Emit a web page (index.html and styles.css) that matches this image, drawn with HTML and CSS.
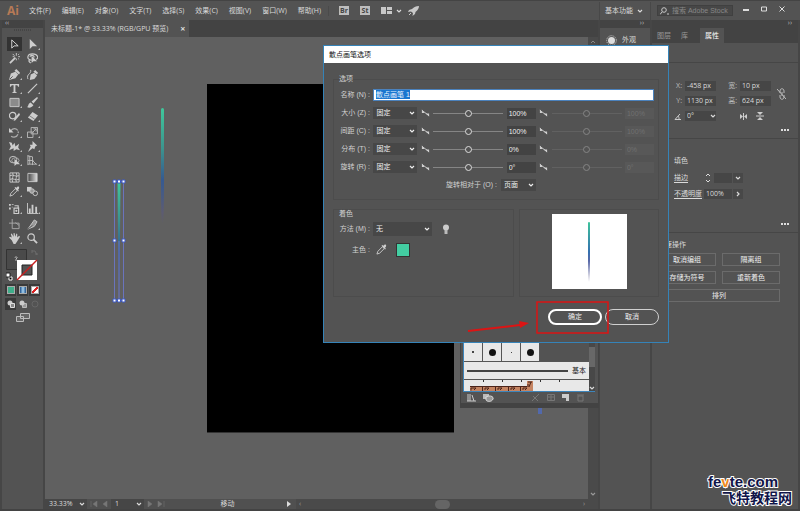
FILE: index.html
```html
<!DOCTYPE html>
<html lang="zh-CN">
<head>
<meta charset="utf-8">
<title>未标题-1</title>
<link rel="stylesheet" href="styles.css">
</head>
<body>
<svg class="defs" aria-hidden="true">
  <symbol id="down" viewBox="0 0 6 6"><path d="M1 2l2 2 2-2" fill="none" stroke="currentColor" stroke-width="1.2"/></symbol>
  <symbol id="right" viewBox="0 0 6 6"><path d="M2 1l2 2-2 2" fill="none" stroke="currentColor" stroke-width="1.2"/></symbol>
  <symbol id="press" viewBox="0 0 10 8"><path d="M1 0v4h3zM5 4.500h4V8z" fill="currentColor"/><path d="M1 1l8 6" stroke="currentColor"/></symbol>
  <symbol id="dots" viewBox="0 0 9 3"><path d="M0 0h2v2H0zM3 0h2v2H3zM6 0h2v2H6z" fill="currentColor"/></symbol>
  <symbol id="dropper" viewBox="0 0 12 12"><path d="M1 11l1-3 5-5 2 2-5 5z" fill="none" stroke="currentColor"/><path d="M6 2l4 4 .8-.8-1-1C12 2 11 0 9.500 .5L8 2l-1-1z" fill="currentColor"/></symbol>
</svg>

<header class="menubar">
  <span class="logo">Ai</span>
  <nav class="menus">
    <button>文件(F)</button><button>编辑(E)</button><button>对象(O)</button><button>文字(T)</button><button>选择(S)</button><button>效果(C)</button><button>视图(V)</button><button>窗口(W)</button><button>帮助(H)</button>
  </nav>
  <div class="apps">
    <button class="app">Br</button><button class="app">St</button>
    <button class="arrange" aria-label="排列文档"><svg width="11" height="7" viewBox="0 0 11 7"><path d="M0 0h5v7H0zM6 0h5v3H6zM6 4h5v3H6z" fill="#c8c8c8"/></svg><svg width="6" height="6"><use href="#down"/></svg></button>
    <button aria-label="GPU"><svg width="11" height="10" viewBox="0 0 11 10"><path d="M11 0C8 0 6 1 4 3L1 4 0 6l3-.5L5 7l-.5 3L7 8l.5-2C10 4 11 2 11 0z" fill="#c8c8c8"/><path d="M1 9l2-2" stroke="#c8c8c8"/></svg></button>
  </div>
  <button class="workspace-menu">基本功能<svg width="6" height="6"><use href="#down"/></svg></button>
  <label class="search"><svg width="9" height="8" viewBox="0 0 9 8"><circle cx="4" cy="3" r="2.300" fill="none" stroke="#c8c8c8"/><path d="M2 5L0 7.500M7 7h2" stroke="#c8c8c8"/></svg><input type="text" placeholder="搜索 Adobe Stock" aria-label="搜索"></label>
  <div class="window-buttons">
    <button aria-label="最小化"><svg width="6" height="6"><path d="M0 4h6" stroke="#ddd" stroke-width="2"/></svg></button>
    <button aria-label="最大化"><svg width="6" height="6"><path d="M.5 1h5v4h-5z" fill="none" stroke="#ddd"/></svg></button>
    <button aria-label="关闭"><svg width="6" height="6"><path d="M.5 .5l5 5M5.500 .5l-5 5" stroke="#ddd"/></svg></button>
  </div>
</header>

<div class="workspace">
  <aside class="toolbar">
    <div class="dock-strip left">‹‹</div>
    <div class="grip"></div>
    <div class="tools">
      <button class="tool active" aria-label="选择"><svg viewBox="0 0 12 12"><path d="M3 1v9l2.500-2.500H10z" fill="none" stroke="#ddd"/></svg></button>
      <button class="tool more" aria-label="直接选择"><svg viewBox="0 0 12 12"><path d="M3 0v11l3-3h5z" fill="#ccc"/></svg></button>
      <button class="tool" aria-label="魔棒"><svg viewBox="0 0 12 12"><path d="M1 11l6-6" stroke="#ccc" stroke-width="2"/><path d="M8 0v3M8 6v2M4 4h2M10 4h2M4 1l2 2M11 1L10 2M11 7l-1-1" stroke="#ccc"/></svg></button>
      <button class="tool" aria-label="套索"><svg viewBox="0 0 12 12"><path d="M5 8C-1 7 0 1 6 1s7 5 4 6M3 7c-2 2 0 3 1 4M3 4c3-3 6 0 4 1" fill="none" stroke="#ccc" stroke-width="1.300"/><path d="M5 3v8l2-2h4z" fill="#ccc"/></svg></button>
    </div>
    <div class="tools">
      <button class="tool more" aria-label="钢笔"><svg viewBox="0 0 12 12"><path d="M0 12l2-7 5-2 3 3-3 4z" fill="#ccc"/><path d="M8 0l4 4-1 2-5-4z" fill="#ccc"/><path d="M1 11l3-3" stroke="#535353"/></svg></button>
      <button class="tool" aria-label="曲率"><svg viewBox="0 0 12 12"><path d="M3 12l1-6 4-2 3 3-3 4z" fill="#ccc"/><path d="M9 1l3 3-1 2-4-3z" fill="#ccc"/><path d="M1 11C-1 5 5 6 4 1" fill="none" stroke="#ccc"/></svg></button>
      <button class="tool more" aria-label="文字"><svg viewBox="0 0 12 12"><path d="M1 1h10v3h-1L9 2.500H7v7l2 1.500H3l2-1.500v-7H3L2 4H1z" fill="#ccc"/></svg></button>
      <button class="tool more" aria-label="直线"><svg viewBox="0 0 12 12"><path d="M1 11L11 1" stroke="#ccc" stroke-width="1.300"/></svg></button>
      <button class="tool more" aria-label="矩形"><svg viewBox="0 0 12 12"><path d="M1 1.500h10v9H1z" fill="#8b8b8b" stroke="#ccc"/></svg></button>
      <button class="tool more" aria-label="画笔"><svg viewBox="0 0 12 12"><path d="M5 5l6-5 1 1-5 6zM4 6l3 3c-2 3-5 3-7 2 2-1 1-4 4-5z" fill="#ccc"/></svg></button>
      <button class="tool more" aria-label="Shaper"><svg viewBox="0 0 12 12"><circle cx="4" cy="5" r="3.500" fill="none" stroke="#ccc" stroke-width="1.300"/><path d="M5 11l1-3 5-6 1 2-5 6z" fill="#ccc"/></svg></button>
      <button class="tool more" aria-label="橡皮擦"><svg viewBox="0 0 12 12"><path d="M6 1l6 4-5 6-6-4z" fill="#ccc"/><path d="M2.500 5l6 4" stroke="#535353" stroke-width=".7"/></svg></button>
    </div>
    <div class="tools">
      <button class="tool more" aria-label="旋转"><svg viewBox="0 0 12 12"><path d="M2 4c4-5 9-1 8 3s-5 5-8 3" fill="none" stroke="#aaa" stroke-width="1.400" stroke-dasharray="9 1 2 1"/><path d="M0 1v5h5z" fill="#ccc"/></svg></button>
      <button class="tool more" aria-label="缩放"><svg viewBox="0 0 12 12"><path d="M4.500 .5h7v7h-7zM.5 5.500h6v6h-6zM6 6l4-4M7 2h3v3" fill="none" stroke="#bbb"/></svg></button>
      <button class="tool more" aria-label="宽度"><svg viewBox="0 0 12 12"><path d="M0 1l3 1 1 3 2-3 1 4 4-3-1 4 2 3-4-1-3 2V8L0 10l2-4z" fill="#ccc"/></svg></button>
      <button class="tool more" aria-label="操控变形"><svg viewBox="0 0 12 12"><path d="M6 0l5 5-2 1-1 3-2-1-5 4 3-6-1-2h3z" fill="#ccc"/></svg></button>
      <button class="tool more" aria-label="形状生成器"><svg viewBox="0 0 12 12"><ellipse cx="4.500" cy="5" rx="4" ry="3.500" fill="none" stroke="#ccc"/><ellipse cx="7" cy="6" rx="4" ry="3" fill="none" stroke="#aaa"/><path d="M6 4v8l2-2h4z" fill="#ccc"/></svg></button>
      <button class="tool more" aria-label="透视网格"><svg viewBox="0 0 12 12"><path d="M1 0v11M1 1l5 1v9M1 6h6M1 10h10M3 1v9M6 6l4 4" fill="none" stroke="#bbb"/></svg></button>
    </div>
    <div class="tools wide">
      <button class="tool" aria-label="网格"><svg viewBox="0 0 12 12"><path d="M1 1h10v10H1zM4 1c2 4-2 6 0 10M8 1c2 4-2 6 0 10M1 4c4-2 6 2 10 0M1 8c4-2 6 2 10 0" fill="none" stroke="#ccc"/></svg></button>
      <button class="tool" aria-label="渐变"><svg viewBox="0 0 12 12"><linearGradient id="gg"><stop stop-color="#444"/><stop offset="1" stop-color="#ddd"/></linearGradient><path d="M1 1.500h10v9H1z" fill="url(#gg)" stroke="#ccc"/></svg></button>
      <button class="tool more" aria-label="吸管"><svg viewBox="0 0 12 12" color="#ccc"><use href="#dropper"/></svg></button>
      <button class="tool" aria-label="混合"><svg viewBox="0 0 12 12"><path d="M0 1h5v5H0z" fill="#ccc"/><circle cx="5.500" cy="5.500" r="2.500" fill="#999" stroke="#ccc"/><circle cx="9" cy="8" r="2.500" fill="#535353" stroke="#ccc"/></svg></button>
    </div>
    <div class="tools wide">
      <button class="tool more" aria-label="符号喷枪"><svg viewBox="0 0 12 12"><path d="M5.500 5.500h5v6h-5zM6 3h4v2" fill="none" stroke="#ccc" stroke-width="1.300"/><path d="M0 1h2v2H0zM3 1h2v1H3zM0 5h2v2H0zM3 4h1v1H3z" fill="#ccc"/><circle cx="8" cy="8.500" r="1.200" fill="#ccc"/></svg></button>
      <button class="tool more" aria-label="柱形图"><svg viewBox="0 0 12 12"><path d="M.5 0v11.500H12" fill="none" stroke="#ccc"/><path d="M2 6h2v5H2zM5 2h2v9H5zM9 4h2v7H9z" fill="#ccc"/></svg></button>
    </div>
    <div class="tools">
      <button class="tool" aria-label="画板"><svg viewBox="0 0 12 12"><path d="M3.500 0v10.500H11v-6H0M7 4l4 3" fill="none" stroke="#aaa"/></svg></button>
      <button class="tool more" aria-label="切片"><svg viewBox="0 0 12 12"><path d="M1 11L8 1l3 2-3 5z" fill="#999" stroke="#ccc"/><path d="M1 11l5-4" stroke="#555"/></svg></button>
      <button class="tool more" aria-label="抓手"><svg viewBox="0 0 12 12"><path d="M3 8L0 5l1-1 2 1-1-4 1-.5L5 4V0h1l1 4 1-3.500 1 .5v4l2-2 1 1-3 5-2 3H5z" fill="#ccc"/></svg></button>
      <button class="tool" aria-label="缩放镜"><svg viewBox="0 0 12 12"><circle cx="4.500" cy="4.500" r="3.500" fill="none" stroke="#ccc" stroke-width="1.300"/><path d="M7 7l4 4" stroke="#ccc" stroke-width="2"/></svg></button>
    </div>
    <svg class="paint" width="34" height="32" viewBox="0 0 34 32">
      <path d="M.5 .5h20v20H.5z" fill="#4a4a4a" stroke="#333"/><path d="M9 9c0-2 3-1 2 0l-1 1v2" fill="none" stroke="#bbb"/>
      <path d="M26 2h3l2 4M26 1v3M29 5h3" fill="none" stroke="#6d6d6d"/>
      <path d="M11 11h20v20H11z" fill="#fff"/><path d="M16 16h10v10H16z" fill="#535353" stroke="#222"/><path d="M11 31L31 11" stroke="#c81e1e" stroke-width="1.500"/>
      <path d="M3 28h3v3H3z" fill="#000" stroke="#fff"/><path d="M0 24h4v4H0z" fill="#fff" stroke="#222"/>
    </svg>
    <div class="modes">
      <button class="mode" aria-label="颜色"><i class="solid"></i></button><button class="mode" aria-label="渐变填色"><i class="ramp"></i></button><button class="mode" aria-label="无"><i class="none"></i></button>
    </div>
    <div class="modes">
      <button class="mode" aria-label="正常绘图"><svg width="8" height="8"><circle cx="3" cy="3" r="2.500" fill="#ccc"/><path d="M3.500 3.500h4v4h-4z" fill="#888" stroke="#ddd"/></svg></button><button class="mode plain" aria-label="背面绘图"><svg width="8" height="8"><path d="M3.500 3.500h4v4h-4z" fill="#999" stroke="#bbb"/><circle cx="3" cy="3" r="2.500" fill="#ccc"/></svg></button><button class="mode plain" aria-label="内部绘图"><svg width="8" height="8"><circle cx="4" cy="4" r="3" fill="none" stroke="#666"/></svg></button>
    </div>
    <button class="screen" aria-label="屏幕模式"><svg width="14" height="10"><path d="M4.500 .5h9v5h-9zM.5 3.500h7v5h-7z" fill="#666" stroke="#bbb"/></svg></button>
  </aside>

  <main class="document">
    <div class="tabs"><div class="tab">未标题-1* @ 33.33% (RGB/GPU 预览)<button aria-label="关闭文档">×</button></div></div>
    <div class="view">
      <div class="canvas">
        <div class="artboard"></div>
        <div class="stroke"></div>
        <svg class="selection" width="14" height="124" viewBox="0 0 14 124">
          <defs><linearGradient id="ink" x2="0" y2="1"><stop stop-color="#3fc89c"/><stop offset=".35" stop-color="#3b8f90"/><stop offset=".6" stop-color="#365b92"/><stop offset="1" stop-color="#666476"/></linearGradient></defs>
          <path d="M5.500 2h3l-1 119h-1z" fill="url(#ink)"/>
          <path d="M2.500 2.500h9v119h-9zM7 62v59" fill="none" stroke="#6a74bd"/>
          <g fill="#fff" stroke="#3c5bc8"><path d="M1 1h3v3H1zM5.500 1h3v3h-3zM10 1h3v3h-3zM1 60h3v3H1zM10 60h3v3h-3zM1 120h3v3H1zM5.500 120h3v3h-3zM10 120h3v3h-3z"/></g>
        </svg>
        <span class="marker"></span>
      </div>
      <div class="vscroll"><svg width="6" height="6"><path d="M1 4l2-2 2 2" fill="none" stroke="#888"/></svg><svg width="6" height="6"><use href="#down"/></svg></div>
    </div>
    <footer class="status">
      <div class="field zoom"><input value="33.33%" aria-label="缩放比例"><svg width="6" height="6"><use href="#down"/></svg></div>
      <svg class="dim" width="18" height="6"><path d="M1 0v6M7 0v6L3 3zM17 0v6l-4-3z" fill="#777" stroke="#777" stroke-width=".5"/></svg>
      <div class="field page"><input value="1" aria-label="画板"><svg width="6" height="6"><use href="#down"/></svg></div>
      <svg class="dim" width="18" height="6"><path d="M1 0v6l4-3zM11 0v6l4-3zM17 0v6" fill="#777" stroke="#777" stroke-width=".5"/></svg>
      <span class="tool-name">移动</span>
      <svg width="4" height="6"><path d="M0 0v6l4-3z" fill="#ddd"/></svg>
      <div class="hscroll"><span>‹</span><i></i><span>›</span></div>
    </footer>
  </main>

  <aside class="dock narrow">
    <div class="dock-strip">››</div>
    <div class="dock-item"><svg width="11" height="11" viewBox="0 0 11 11"><circle cx="5.500" cy="5.500" r="3.500" fill="#ddd"/><circle cx="5.500" cy="5.500" r="4.800" fill="none" stroke="#ccc" stroke-dasharray="1 1"/></svg>外观</div>
  </aside>

  <aside class="dock props">
    <div class="dock-strip">››</div>
    <div class="dock-tabs"><button>图层</button><button>库</button><button class="on">属性</button></div>
    <section class="kind"></section>
    <section class="transform">
      <label for="px">X:</label><input id="px" value="-458 px"><label for="pw">宽:</label><input id="pw" value="10 px">
      <label for="py">Y:</label><input id="py" value="1130 px"><label for="ph">高:</label><input id="ph" value="624 px">
      <button class="link" aria-label="约束比例"><svg width="9" height="12" viewBox="0 0 9 12"><path d="M3 5V3c0-3 4-3 4 0v2M3 7v2c0 3 4 3 4 0V7M5 4v4M0 1l9 10" fill="none" stroke="#bbb"/></svg></button>
      <label for="pa"><svg width="8" height="7"><path d="M7 6.500H1L6 1M4 3c1 1 1 2 1 3" fill="none" stroke="#ccc"/></svg></label>
      <div class="field"><input id="pa" value="0°"><svg width="6" height="6"><use href="#down"/></svg></div>
      <div class="flips"><svg width="9" height="7"><path d="M1 1v5l3-2.500zM8 1v5L5 3.500z" fill="#ccc"/><path d="M4.500 0v7" stroke="#ccc"/></svg><svg width="8" height="8"><path d="M1 0h6L4 3zM1 8h6L4 5z" fill="#ccc"/><path d="M0 4h8" stroke="#ccc"/></svg></div>
      <svg class="dots" width="9" height="3"><use href="#dots"/></svg>
    </section>
    <section class="appearance">
      <h2>填色</h2>
      <div class="line"><label for="sw">描边</label><svg width="6" height="10"><path d="M1 3l2-2 2 2M1 7l2 2 2-2" fill="none" stroke="#ddd"/></svg><input id="sw" class="short"><button aria-label="描边粗细"><svg width="6" height="6"><use href="#down"/></svg></button></div>
      <div class="line"><label for="op">不透明度</label><input id="op" value="100%"><button aria-label="更多不透明度"><svg width="6" height="6"><use href="#right"/></svg></button></div>
      <svg class="dots" width="9" height="3"><use href="#dots"/></svg>
    </section>
    <section class="actions">
      <h2>快速操作</h2>
      <div class="action-grid"><button>取消编组</button><button>隔离组</button><button>存储为符号</button><button>重新着色</button><button class="full">排列</button></div>
    </section>
  </aside>
</div>

<section class="brushes" aria-label="画笔">
  <div class="brush-body">
    <div class="brush-list">
      <div class="cells"><span><i class="s1"></i></span><span><i class="s2"></i></span><span><i class="s3"></i></span><span><i class="s2"></i></span></div>
      <div class="basic"><i></i>基本</div>
      <svg class="pattern" width="125" height="11" viewBox="0 0 125 11"><path d="M0 0h125v11H0z" fill="#e8e8e8"/><path d="M19.500 0v2M38.500 0v2M57.500 0v2M76.500 0v2M95.500 0v2" stroke="#333"/><path d="M6 6h57V1h6v10H6z" fill="#c58462"/><path d="M6 6.500h57M7 10.500V8h5l-2 2M18.500 11V6M21 10V8h4l-2 2M31.500 11V6M34 10V8h4l-2 2M44.500 11V6M47 10V8h4l-2 2M56.500 11V6M59 10V8h4l-2 2M64 2h4M67 2l-2 5M64 7V4" fill="none" stroke="#4b241a"/></svg>
    </div>
    <div class="brush-scroll"><i></i><svg width="6" height="6"><use href="#down"/></svg></div>
  </div>
  <div class="brush-tools">
    <svg width="9" height="8"><path d="M1 0v7M3 0v7M5 1l2 6M0 7h9" stroke="#ccc" fill="none"/></svg>
    <svg width="11" height="8"><path d="M0 0h6v5H0z" fill="#bbb"/><path d="M3 3c3-2 8-1 7 2s-6 3-7 1z" fill="#999" stroke="#ddd"/></svg>
    <svg class="push" width="8" height="8"><path d="M0 7l7-7M1 2l5 5" stroke="#777"/></svg>
    <svg width="8" height="8"><path d="M.5 .5h7v6h-7zM0 3h8M4 0v7" stroke="#777" fill="none"/></svg>
    <svg width="8" height="8"><path d="M0 0h7v7H4V4H0z" fill="#ccc"/></svg>
    <svg width="7" height="8"><path d="M1 2h5v5H1zM0 1h7" stroke="#777" fill="none"/></svg>
  </div>
</section>

<div class="dialog" role="dialog" aria-label="散点画笔选项">
  <div class="title">散点画笔选项</div>
  <div class="content">
    <div class="group options">
      <h2>选项</h2>
      <div class="row"><label for="nm">名称 (N) :</label><div class="name"><input id="nm" aria-label="名称"><mark>散点画笔 1</mark></div></div>
      <div class="row"><label for="r1">大小 (Z) :</label><select id="r1"><option>固定</option></select><svg width="9" height="8"><use href="#press"/></svg><input type="range" aria-label="大小"><input value="100%" aria-label="大小值"><svg width="9" height="8"><use href="#press"/></svg><input type="range" disabled aria-label="大小上限"><input value="100%" disabled aria-label="大小上限值"></div>
      <div class="row"><label for="r2">间距 (C) :</label><select id="r2"><option>固定</option></select><svg width="9" height="8"><use href="#press"/></svg><input type="range" aria-label="间距"><input value="100%" aria-label="间距值"><svg width="9" height="8"><use href="#press"/></svg><input type="range" disabled aria-label="间距上限"><input value="100%" disabled aria-label="间距上限值"></div>
      <div class="row"><label for="r3">分布 (T) :</label><select id="r3"><option>固定</option></select><svg width="9" height="8"><use href="#press"/></svg><input type="range" aria-label="分布"><input value="0%" aria-label="分布值"><svg width="9" height="8"><use href="#press"/></svg><input type="range" disabled aria-label="分布上限"><input value="0%" disabled aria-label="分布上限值"></div>
      <div class="row"><label for="r4">旋转 (R) :</label><select id="r4"><option>固定</option></select><svg width="9" height="8"><use href="#press"/></svg><input type="range" aria-label="旋转"><input value="0°" aria-label="旋转值"><svg width="9" height="8"><use href="#press"/></svg><input type="range" disabled aria-label="旋转上限"><input value="0°" disabled aria-label="旋转上限值"></div>
      <div class="relative"><label for="rel">旋转相对于 (O) :</label><select id="rel"><option>页面</option></select></div>
    </div>
    <div class="lower">
      <div class="group tint">
        <h2>着色</h2>
        <div class="method"><label for="mt">方法 (M) :</label><select id="mt"><option>无</option></select><svg width="8" height="11" viewBox="0 0 8 11"><circle cx="4" cy="3.500" r="3" fill="#ccc"/><path d="M2.500 6h3v4h-3z" fill="#bbb"/></svg></div>
        <div class="key"><span>主色 :</span><svg width="11" height="11" color="#ccc"><use href="#dropper"/></svg><button class="swatch" aria-label="主色"></button></div>
      </div>
      <div class="group preview"><div class="paper"><i></i></div></div>
    </div>
    <div class="buttons"><button class="ok">确定</button><button>取消</button></div>
  </div>
  <svg class="callout" width="144" height="36" viewBox="0 0 144 36"><path d="M70 3h71v31H70z" fill="none" stroke="#dc1414" stroke-width="1.500"/><path d="M1 32l52-6" stroke="#dc1414" stroke-width="2"/><path d="M52 22l10 2-9 5z" fill="#dc1414"/></svg>
</div>

<div class="watermark"><b>fe<em>v</em>te.com</b><span>飞特教程网</span></div>
</body>
</html>
```
FILE: styles.css
```css
* { box-sizing: border-box; margin: 0; padding: 0; }
html, body { height: 100%; }
body {
  display: flex; flex-direction: column; overflow: hidden; position: relative;
  background: #535353; color: #dadada; border-bottom: 2px solid #434343;
  font: 7px/10px "Open Sans", "Noto Sans CJK SC", sans-serif;
}
.defs { position: absolute; width: 0; height: 0; }
svg { display: block; flex: none; }
button, input, select { font: inherit; color: inherit; background: none; border: 0; border-radius: 0; outline: 0; min-width: 0; }
h2 { font: inherit; }
i { display: block; }

.menubar { display: flex; align-items: center; height: 20px; flex: none; border-top: 1px solid #444; }
.logo { width: 29px; padding-left: 7px; color: #b77a56; font: bold 12px/18px "Open Sans", sans-serif; }
.menus { display: flex; gap: 11px; padding-right: 7px; border-right: 1px solid #4a4a4a; white-space: nowrap; }
.apps { display: flex; align-items: center; gap: 11px; padding-left: 10px; flex: 1; }
.apps .app { width: 10px; height: 9px; background: #bdbdbd; color: #444; font-weight: bold; line-height: 9px; }
.arrange { display: flex; align-items: center; gap: 4px; margin-right: -5px; }
.workspace-menu { display: flex; align-items: center; justify-content: space-between; width: 52px; height: 18px; padding: 0 7px 0 5px; border: solid #484848; border-width: 0 1px; }
.search { display: flex; align-items: center; gap: 3px; width: 76px; height: 11px; margin-left: 6px; padding: 0 1px 0 2px; background: #474747; border: 1px solid #404040; }
.search input { flex: 1; width: 0; font-family: "Liberation Sans", "Noto Sans CJK SC", sans-serif; }
.search input::placeholder { color: #888; }
.window-buttons { display: flex; align-items: center; gap: 12px; padding: 0 15px 4px 10px; }

.workspace { display: flex; flex: 1; min-height: 0; }
.dock-strip { height: 8px; padding-right: 6px; background: #434343; color: #bbb; text-align: right; line-height: 6px; }
.dock-strip.left { padding-left: 3px; text-align: left; }
.toolbar { width: 45px; flex: none; border: solid #464646; border-width: 0 2px; }
.grip { height: 2px; margin: 1px 12px 6px; border: dotted #454545; border-width: 1px 0; }
.tools { display: grid; grid-template-columns: 15px 15px; gap: 0 3px; margin: 0 0 2px 5px; }
.tools.wide { margin-top: 3px; }
.tool { position: relative; height: 14px; padding: 2px; display: grid; place-items: center; }
.tool svg { width: 11px; height: 11px; }
.tool.active { background: #333; }
.tool.more::after { content: ""; position: absolute; right: 0; bottom: 1px; border: 1px solid #bbb; border-top-color: transparent; border-left-color: transparent; }
.paint { margin: 4px 0 3px 4px; }
.modes { display: flex; gap: 1px; margin: 0 0 2px 3px; }
.mode { width: 11px; height: 12px; display: grid; place-items: center; background: #3a3a3a; }
.mode.plain { background: none; }
.mode i { width: 8px; height: 8px; border: 1px solid #aaa; }
.mode .solid { background: #3fae8a; }
.mode .ramp { background: linear-gradient(90deg, #1c4f8c, #a8d4f0, #1c4f8c); }
.mode .none { background: linear-gradient(135deg, #fff 38%, #d22 40%, #d22 60%, #fff 62%); }
.screen { display: block; margin: 3px 0 0 14px; }

.document { flex: 1; min-width: 0; display: flex; flex-direction: column; }
.tabs { height: 17px; background: #434343; display: flex; flex: none; }
.tab { display: flex; align-items: center; gap: 12px; padding: 0 4px 0 6px; background: #535353; white-space: nowrap; }
.tab button { font: bold 9px/10px "Open Sans", sans-serif; }
.view { display: flex; flex: 1; min-height: 0; }
.canvas { position: relative; flex: 1; background: #606060; overflow: hidden; }
.artboard { position: absolute; left: 162px; top: 47px; width: 247px; height: 349px; background: #000; border-bottom: 1px solid #333; }
.stroke { position: absolute; left: 116px; top: 71px; width: 3px; height: 116px; border-radius: 2px 2px 50% 50%; background: linear-gradient(#3fc89c, #3c948e 35%, #355a92 62%, #5c5b73 90%, #606060); }
.selection { position: absolute; left: 67px; top: 142px; }
.marker { position: absolute; left: 493px; top: 371px; width: 4px; height: 6px; background: #5269ac; }
.vscroll { width: 10px; padding: 2px; background: #4a4a4a; color: #999; display: flex; flex-direction: column; justify-content: space-between; }
.status { display: flex; align-items: center; height: 10px; flex: none; background: #505050; }
.field { display: flex; align-items: center; }
.field input { flex: 1; width: 0; }
.status .field { height: 10px; background: #464646; padding: 0 2px 0 4px; }
.zoom { width: 42px; }
.page { width: 33px; }
.dim { margin: 0 3px; }
.tool-name { width: 119px; text-align: center; }
.hscroll { display: flex; flex: 1; justify-content: space-between; align-items: center; height: 10px; margin-left: 5px; padding: 0 13px 0 3px; background: #4a4a4a; color: #999; }
.hscroll i { width: 15px; height: 9px; border-radius: 5px; background: #656565; }

.dock { flex: none; border-left: 2px solid #464646; }
.narrow { width: 52px; }
.dock-item { display: flex; align-items: center; gap: 5px; height: 24px; padding: 0 6px; }
.props { width: 150px; border-right: 2px solid #464646; }
.dock-tabs { display: flex; height: 15px; background: #434343; }
.dock-tabs button { padding: 0 5px; color: #999; }
.dock-tabs .on { margin-left: 7px; background: #535353; color: #fff; }
.props section { border-bottom: 1px solid #464646; }
.kind { height: 20px; }
.props input { background: #464646; height: 10px; padding: 0 2px; }
.transform { position: relative; height: 76px; padding: 18px 26px 0 20px; display: grid; grid-template-columns: 10px 31px 18px 31px; grid-auto-rows: 10px; gap: 5px 3px; align-items: center; }
.transform label { justify-self: end; color: #bbb; }
.transform .field { background: #464646; }
.flips { grid-column: 3 / 5; display: flex; align-items: center; gap: 8px; padding-left: 20px; }
.link { position: absolute; right: 12px; top: 25px; }
.dots { position: absolute; right: 8px; bottom: 6px; color: #ddd; }
.appearance { position: relative; height: 94px; padding: 17px 24px 0 22px; }
.appearance h2 { margin-bottom: 6px; }
.line { display: flex; align-items: center; height: 11px; margin-bottom: 5px; }
.line label { flex: none; width: 30px; text-decoration: underline; text-underline-offset: 2px; white-space: nowrap; }
.line svg + .short { width: 18px; margin-left: 4px; }
.line input { width: 28px; }
.line > svg { margin-left: 1px; margin-right: -1px; }
.line button { height: 10px; width: 10px; padding: 2px; margin-left: 1px; background: #484848; }
.props .actions { padding: 7px 18px 0 6px; border: 0; }
.action-grid { display: grid; grid-template-columns: 1fr 1fr; gap: 5px 6px; margin-top: 3px; }
.action-grid button { height: 13px; border: 1px solid #6b6b6b; color: #eee; line-height: 11px; }
.action-grid .full { grid-column: 1 / 3; }

.brushes { position: absolute; left: 460px; top: 338px; width: 139px; background: #535353; border: solid #434343; border-width: 0 1px 5px; }
.brush-body { display: flex; margin: 0 3px 0 2px; border: 1px solid #3d85bb; }
.brush-list { flex: 1; }
.cells { display: flex; height: 22px; padding-top: 4px; }
.cells span { width: 19px; display: grid; place-items: center; background: #e8e8e8; border-right: 1px solid #555; }
.cells i { border-radius: 50%; background: #111; }
.s1 { width: 2px; height: 2px; }
.s2 { width: 7px; height: 7px; }
.s3 { width: 1px; height: 1px; }
.basic { display: flex; align-items: center; gap: 4px; height: 19px; padding: 0 3px; background: #e8e8e8; color: #222; border: solid #555; border-width: 1px 0; }
.basic i { flex: 1; height: 2px; background: #444; }
.brush-scroll { width: 6px; display: flex; flex-direction: column; justify-content: space-between; background: #484848; }
.brush-scroll i { height: 20px; margin-top: 8px; background: #686868; }
.brush-tools { display: flex; align-items: center; gap: 7px; height: 11px; padding: 0 14px 0 6px; }
.brush-tools .push { margin-left: auto; }

.dialog { position: absolute; left: 323px; top: 45px; width: 346px; background: #535353; border: 1px solid #3583b8; color: #d0d0d0; font-family: "Liberation Sans", "Noto Sans CJK SC", sans-serif; }
.title { height: 17px; padding: 0 5px; background: #fff; color: #111; line-height: 17px; }
.content { padding: 16px 9px 17px; }
.group { border: 1px solid #4c4c4c; }
.group h2 { line-height: 8px; margin-top: -5px; }
.group label { white-space: nowrap; }
.options { height: 121px; padding: 0 4px 0 5px; }
.options h2 { margin-bottom: 3px; }
.row { display: grid; grid-template-columns: 31px 44px 9px 70px 29px 9px 70px 29px; justify-content: space-between; align-items: center; height: 18px; }
.row label { justify-self: end; }
.row:nth-child(2) { grid-template-columns: 31px 1fr; column-gap: 3px; }
.name { position: relative; height: 12px; background: #fff; border: 1px solid #4b82bd; }
.name input { position: absolute; inset: 0; width: 100%; height: 100%; }
.name mark { position: absolute; left: 2px; top: 0; height: 9px; line-height: 9px; background: #1976cf; color: #e8f4ff; }
select { appearance: none; height: 12px; padding: 0 3px; color: #eee; background: #474747 url("data:image/svg+xml,%3Csvg xmlns='http://www.w3.org/2000/svg' width='6' height='6'%3E%3Cpath d='M1 2l2 2 2-2' fill='none' stroke='%23eee' stroke-width='1.200'/%3E%3C/svg%3E") no-repeat right 2px center; }
.row input:not([type]) { height: 11px; color: #eee; }
.row > input:not([type]) { background: #434343; padding: 0 2px; }
.row > input:not([type]):disabled { background: #585858; color: #707070; }
input[type=range] { appearance: none; width: 100%; height: 9px; background: linear-gradient(#858585, #858585) center / 100% 1px no-repeat; }
input[type=range]::-webkit-slider-thumb { appearance: none; width: 7px; height: 7px; border: 1px solid #ddd; border-radius: 50%; background: #535353; }
input[type=range]:disabled { background-image: linear-gradient(#616161, #616161); }
input[type=range]:disabled::-webkit-slider-thumb { border-color: #858585; }
.relative { display: flex; justify-content: flex-end; align-items: center; gap: 4px; height: 18px; padding-right: 118px; }
.relative select { width: 35px; }
.lower { display: grid; grid-template-columns: 181px 1fr; gap: 5px; margin-top: 9px; }
.lower .group { height: 88px; }
.tint { padding: 0 5px; }
.tint h2 { margin: 0 0 4px; }
.method, .key { display: flex; align-items: center; }
.method label { width: 31px; text-align: right; }
.method select { width: 59px; height: 14px; margin: 0 10px 0 3px; }
.key { height: 15px; margin-top: 6px; }
.key span { width: 31px; text-align: right; }
.key svg { margin: 0 9px 0 6px; }
.swatch { width: 14px; height: 14px; background: #43cda2; border: 1px solid #333; }
.preview { display: grid; place-items: start center; padding-top: 4px; }
.paper { width: 75px; height: 75px; background: #fff; display: grid; place-items: center; }
.paper i { width: 2px; height: 60px; border-radius: 1px; background: linear-gradient(#3fc49c, #3470b0 50%, #5969a8 65%, #d8d8e4 90%, #fff); }
.buttons { display: flex; justify-content: flex-end; gap: 3px; margin-top: 12px; }
.buttons button { width: 54px; height: 16px; border: 1px solid #d0d0d0; border-radius: 8px; color: #eee; }
.buttons .ok { border: 2px solid #fff; }
.callout { position: absolute; left: 143px; top: 253px; pointer-events: none; }

.watermark { position: absolute; right: 8px; bottom: 4px; display: flex; flex-direction: column; align-items: flex-end; color: #10154a; -webkit-text-stroke: 2px #fff; paint-order: stroke fill; }
.watermark b { margin-right: 14px; font: bold 15px/16px "Liberation Sans", sans-serif; }
.watermark em { font-style: normal; color: #f08a1c; }
.watermark span { font: bold 14px/15px "Noto Sans CJK SC", sans-serif; }
```
